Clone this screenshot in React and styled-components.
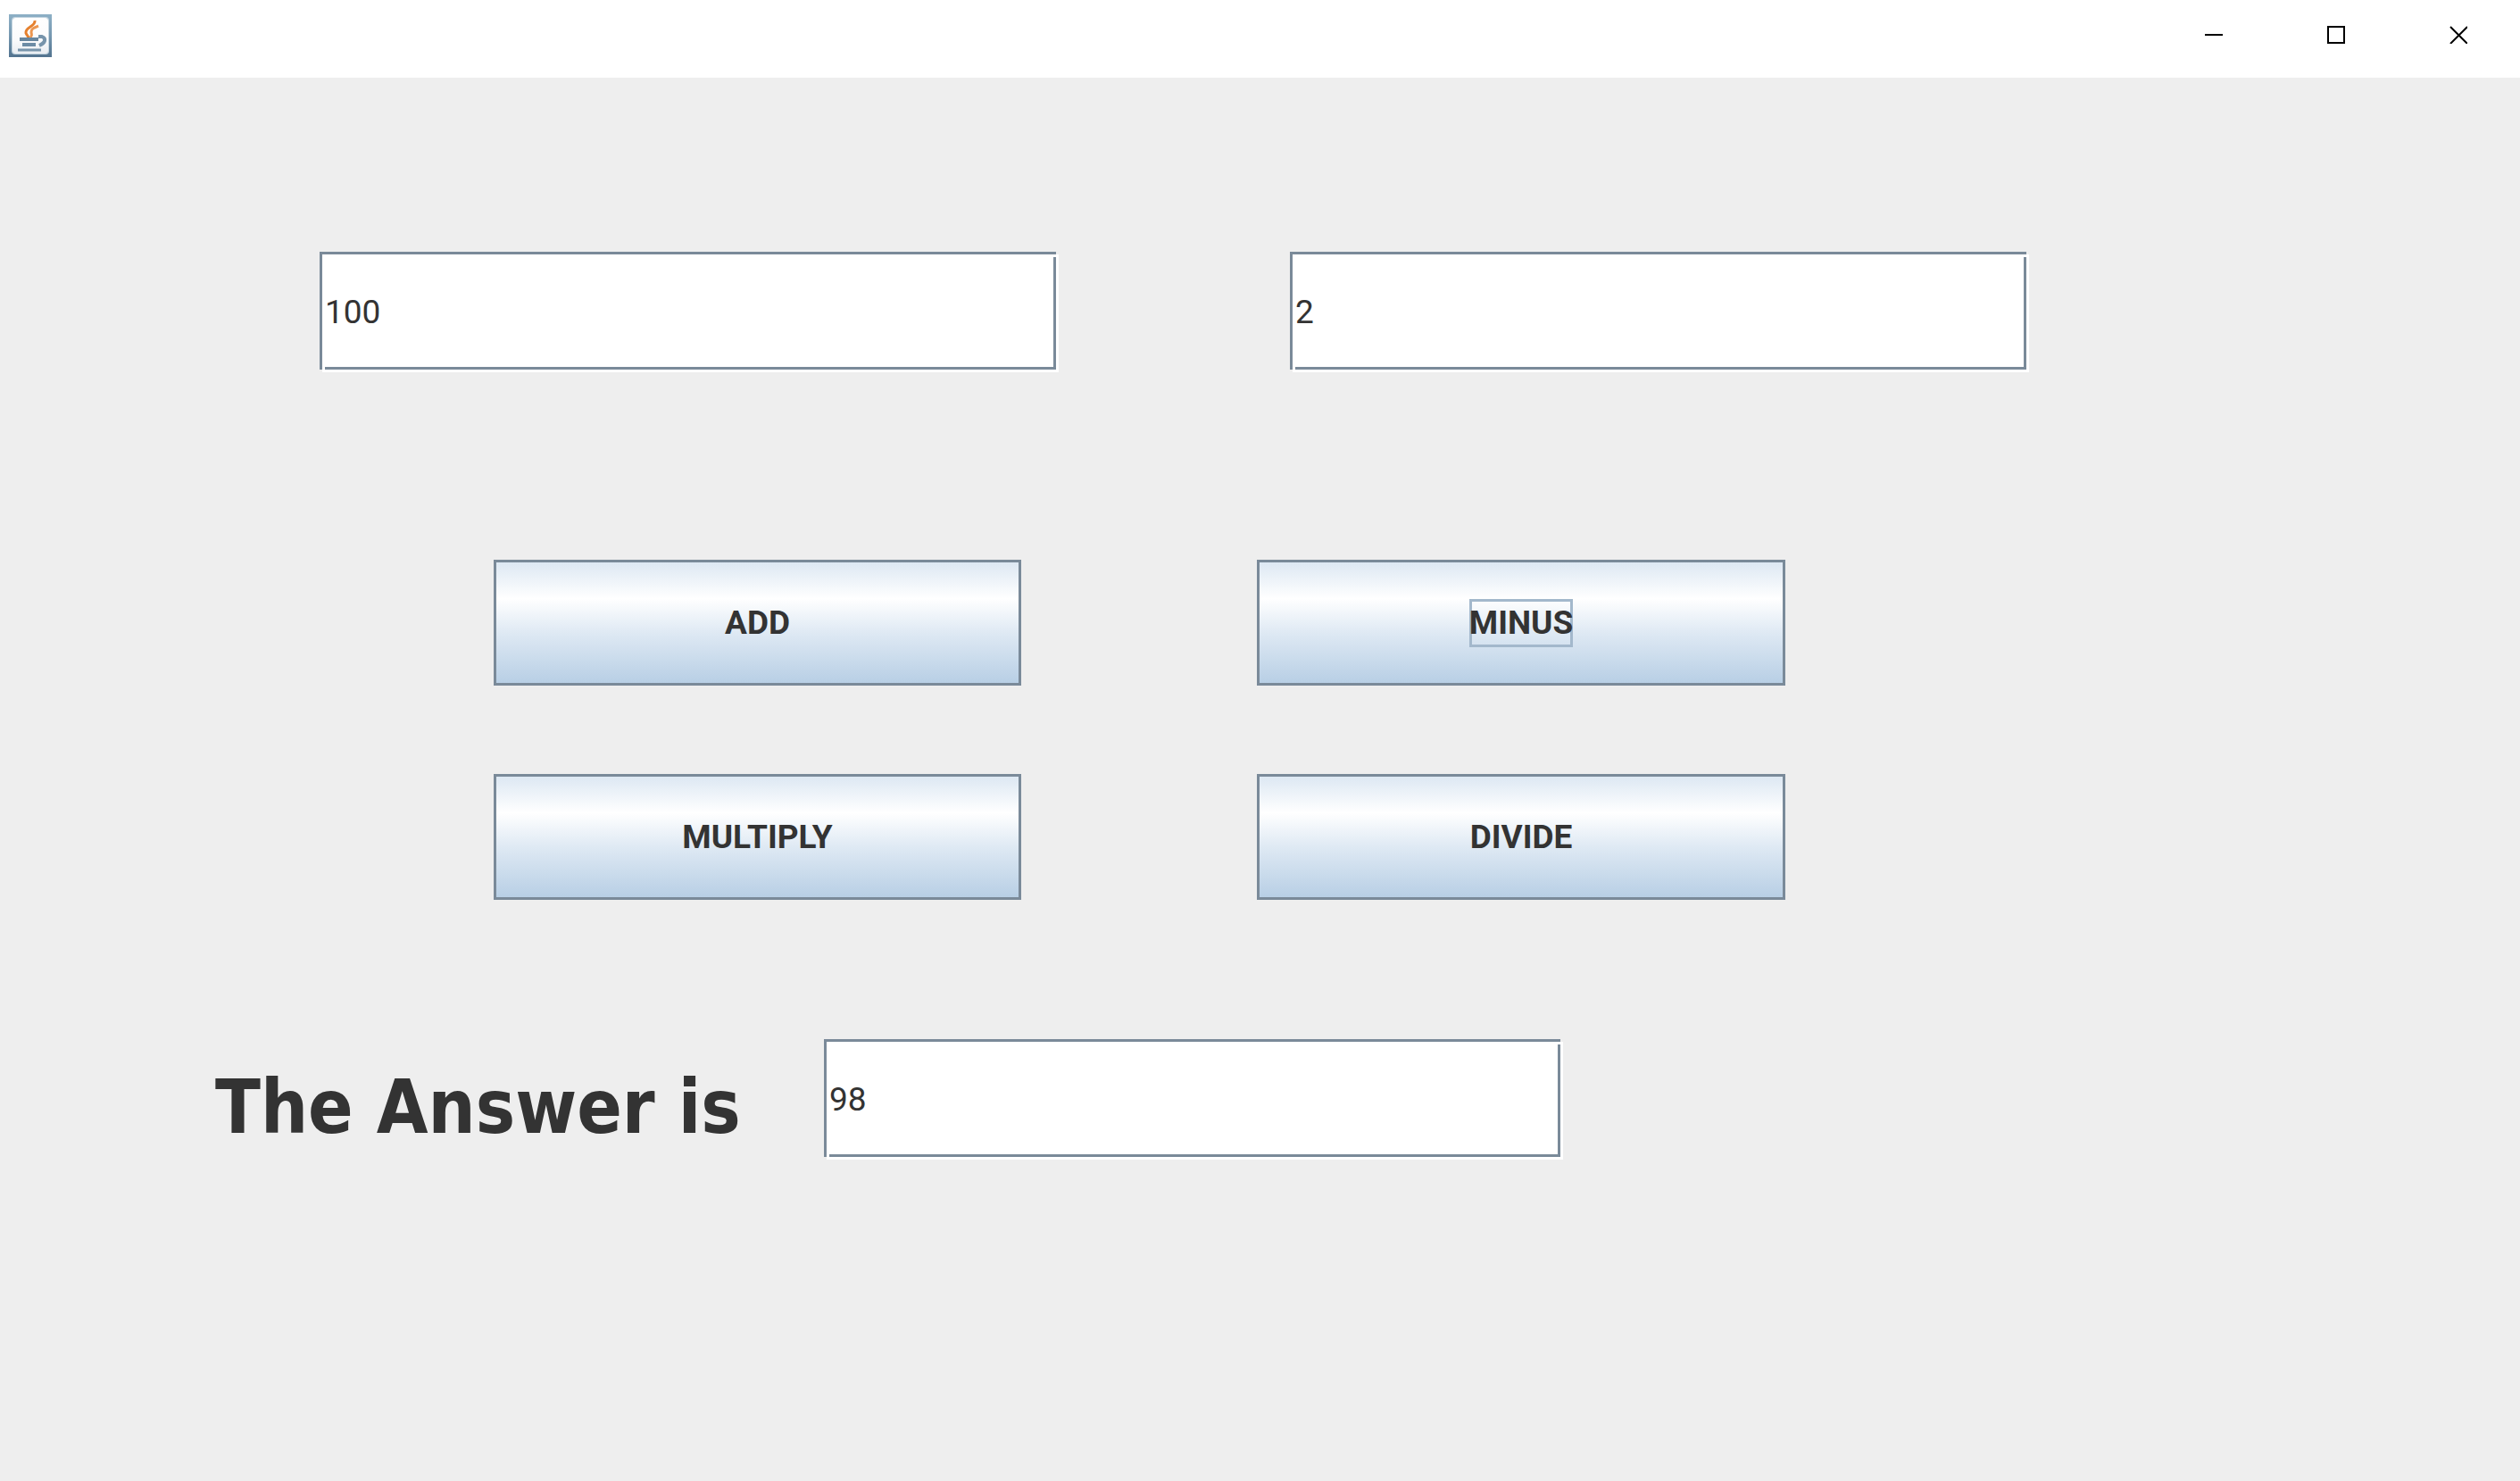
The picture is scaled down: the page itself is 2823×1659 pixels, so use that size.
import React, { useState } from 'react';
import styled, { createGlobalStyle, css } from 'styled-components';

const GlobalStyle = createGlobalStyle`
  * { box-sizing: border-box; }
  body {
    margin: 0;
    background: #eeeeee;
    color: #333333;
    font-family: Roboto, "Liberation Sans", sans-serif;
  }
`;

const Frame = styled.div`
  display: flex;
  flex-direction: column;
  min-height: 100vh;
`;

const TitleBar = styled.header`
  display: flex;
  justify-content: space-between;
  align-items: flex-start;
  height: 87px;
  padding-left: 10px;
  background: #ffffff;
`;

const AppIcon = styled.svg`
  width: 48px;
  height: 48px;
  margin-top: 16px;
`;

const WindowControls = styled.div`
  display: flex;
`;

const WindowButton = styled.button`
  height: 78px;
  padding: 0 59px 0 58px;
  border: 0;
  background: transparent;
  color: #000000;

  svg {
    display: block;
    width: 20px;
    height: 20px;
    fill: none;
    stroke: currentColor;
    stroke-width: 2;
  }
`;

const Content = styled.main`
  display: flex;
  flex-direction: column;
  padding-top: 195px;
`;

const InputRow = styled.div`
  display: grid;
  grid-template-columns: 358fr 828fr 259fr 828fr 550fr;

  input:first-child { grid-column: 2; }
  input:last-child { grid-column: 4; }
`;

const ButtonGrid = styled.div`
  display: grid;
  grid-template-columns: 553fr 591fr 264fr 592fr 823fr;
  row-gap: 99px;
  margin-top: 210px;

  button:nth-child(odd) { grid-column: 2; }
  button:nth-child(even) { grid-column: 4; }
`;

const AnswerRow = styled.div`
  display: grid;
  grid-template-columns: 241fr 682fr 828fr 1072fr;
  margin-top: 156px;

  label { grid-column: 2; }
  input { grid-column: 3; }
`;

const line = 'linear-gradient(#7a8a99, #7a8a99)';

/* Etched border: grey lines with a white highlight on the right and bottom. */
const Field = styled.input`
  width: 100%;
  min-width: 0;
  height: 135px;
  padding: 0 6px;
  border: 0;
  border-radius: 0;
  outline: 0;
  background:
    ${line} left 0 top 0 / calc(100% - 3px) 3px no-repeat,
    ${line} left 0 top 0 / 3px calc(100% - 3px) no-repeat,
    ${line} left 6px bottom 3px / calc(100% - 9px) 3px no-repeat,
    ${line} right 3px top 6px / 3px calc(100% - 9px) no-repeat,
    linear-gradient(#ffffff, #ffffff) right 0 bottom 0 / calc(100% - 3px) calc(100% - 3px) no-repeat;
  color: #333333;
  font-family: inherit;
  font-size: 37px;
`;

const OperationButton = styled.button`
  height: 141px;
  padding: 0;
  border: 3px solid #7a8a99;
  border-radius: 0;
  outline: 0;
  background: linear-gradient(#dde8f3 0%, #ffffff 30%, #dde8f3 60%, #b8cfe5 100%);
  color: #333333;
  font-family: inherit;
  font-size: 37px;
  font-weight: 700;
`;

const Caption = styled.span`
  display: inline-block;
  line-height: 54px;
  ${({ $focused }) => $focused && css`
    box-shadow: inset 0 0 0 3px #a3b8cc;
  `}
`;

const AnswerLabel = styled.label`
  align-self: end;
  font-family: "DejaVu Sans Condensed", "DejaVu Sans", sans-serif;
  font-size: 83px;
  font-weight: 700;
  line-height: 116px;
  white-space: nowrap;
`;

const operations = [
  { name: 'ADD', run: (a, b) => a + b },
  { name: 'MINUS', run: (a, b) => a - b },
  { name: 'MULTIPLY', run: (a, b) => a * b },
  { name: 'DIVIDE', run: (a, b) => a / b },
];

function JavaIcon() {
  return (
    <AppIcon viewBox="0 0 48 48" role="img" aria-label="Java">
      <defs>
        <linearGradient id="rim" x1="0" y1="0" x2="0" y2="1">
          <stop offset="0" stopColor="#8db0c6" />
          <stop offset="0.5" stopColor="#7597b0" />
          <stop offset="1" stopColor="#52738f" />
        </linearGradient>
        <linearGradient id="face" x1="0" y1="0" x2="0" y2="1">
          <stop offset="0" stopColor="#ffffff" />
          <stop offset="0.6" stopColor="#fbfbfc" />
          <stop offset="1" stopColor="#e9edf2" />
        </linearGradient>
      </defs>
      <rect width="48" height="48" fill="url(#rim)" />
      <rect x="3" y="3" width="42" height="42" rx="4" fill="#c3d4df" />
      <rect x="4" y="4" width="40" height="40" rx="4" fill="url(#face)" />
      <g fill="none">
        <path d="M29 7C30 14 18 14 19 21C20 24 22 24 22 27" stroke="#e5812f" strokeWidth="3" />
        <path d="M33 13C28 15 25 16 25 20C25 23 27 23 24 26" stroke="#eb9650" strokeWidth="3" />
        <path d="M12 28H33" stroke="#67869f" strokeWidth="4" />
        <path d="M15 34H30" stroke="#6d8ca5" strokeWidth="4" />
        <path d="M33 25H37C42 27 41 32 34 35" stroke="#7794ab" strokeWidth="4" />
        <path d="M10 40H36" stroke="#7794ab" strokeWidth="3" />
      </g>
    </AppIcon>
  );
}

export default function App() {
  const [first, setFirst] = useState('100');
  const [second, setSecond] = useState('2');
  const [answer, setAnswer] = useState('98');
  const [focused, setFocused] = useState('MINUS');

  const calculate = (operation) => {
    setFocused(operation.name);
    setAnswer(String(operation.run(Number(first), Number(second))));
  };

  return (
    <Frame>
      <GlobalStyle />
      <TitleBar>
        <JavaIcon />
        <WindowControls>
          <WindowButton type="button" aria-label="Minimize">
            <svg viewBox="0 0 20 20"><path d="M0 10H20" /></svg>
          </WindowButton>
          <WindowButton type="button" aria-label="Maximize">
            <svg viewBox="0 0 20 20"><rect x="1" y="1" width="18" height="18" /></svg>
          </WindowButton>
          <WindowButton type="button" aria-label="Close">
            <svg viewBox="0 0 20 20"><path d="M1 1L20 20M20 1L1 20" /></svg>
          </WindowButton>
        </WindowControls>
      </TitleBar>
      <Content>
        <InputRow>
          <Field aria-label="First number" value={first} onChange={(e) => setFirst(e.target.value)} />
          <Field aria-label="Second number" value={second} onChange={(e) => setSecond(e.target.value)} />
        </InputRow>
        <ButtonGrid>
          {operations.map((operation) => (
            <OperationButton key={operation.name} type="button" onClick={() => calculate(operation)}>
              <Caption $focused={operation.name === focused}>{operation.name}</Caption>
            </OperationButton>
          ))}
        </ButtonGrid>
        <AnswerRow>
          <AnswerLabel htmlFor="answer">The Answer is</AnswerLabel>
          <Field id="answer" value={answer} readOnly />
        </AnswerRow>
      </Content>
    </Frame>
  );
}
